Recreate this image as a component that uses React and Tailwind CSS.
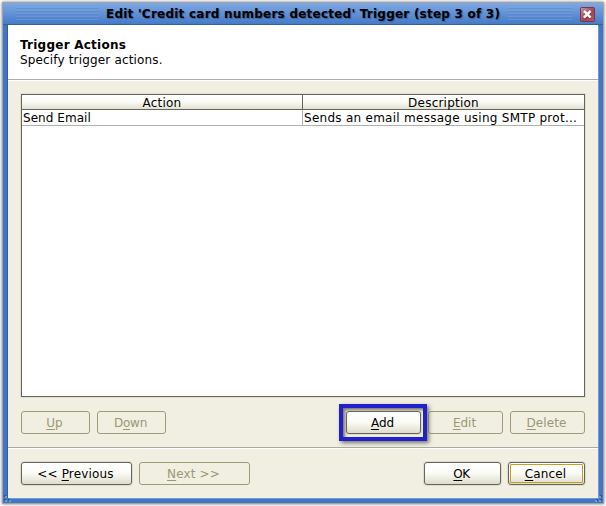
import React from 'react';
import clsx from 'clsx';

const Button = ({ className, textClassName, label, mnemonic = 0, disabled, focused }) => (
    <button
        disabled={disabled}
        className={clsx(
            'relative flex h-[23px] shrink-0 items-center justify-center rounded-[3px] border pt-[2px] pr-[2px] text-[12px] leading-[15px]',
            disabled
                ? 'border-[#9c9c78] text-[#999973]'
                : 'border-[#65655a] bg-linear-to-b from-white via-[#fafaf5] to-[#dddccb] text-black shadow-[0_0_0_1px_#dedccf]',
            className
        )}
    >
        {focused && <span className="absolute inset-px rounded-[1px] border border-[#c89b22]" />}
        <span className={clsx('relative whitespace-pre', textClassName)}>
            {label.slice(0, mnemonic)}
            <span className="underline decoration-1 underline-offset-2">{label[mnemonic]}</span>
            {label.slice(mnemonic + 1)}
        </span>
    </button>
);

// Engraved stripes on both sides of the window title
const Grip = ({ className }) => (
    <div className={clsx('flex h-[14px] shrink-0 flex-col justify-between', className)}>
        {[0, 1, 2, 3, 4].map((i) => (
            <div key={i} className="h-[2px] border-t border-b border-t-[#82a9e1]/40 border-b-[#4d79be]/30" />
        ))}
    </div>
);

const CornerDots = ({ className }) => (
    <svg className={className} width="9" height="9" viewBox="0 0 9 9" shapeRendering="crispEdges">
        {[[1, 1], [1, 5], [5, 5]].map(([x, y]) => (
            <g key={`${x}-${y}`}>
                <rect x={x} y={y} width="2" height="2" fill="#2c5798" />
                <rect x={x + 1} y={y + 1} width="2" height="2" fill="#7199d4" />
            </g>
        ))}
    </svg>
);

const App = () => {
    return (
        <div className="h-[506px] w-[606px] bg-white pt-[3px] pl-[3px] font-['DejaVu_Sans',sans-serif] text-[12px] text-black">
            <div className="relative flex h-[500px] w-[600px] flex-col bg-[#4276c2] px-[5px] pb-[5px] shadow-[0_0_0_1px_#a0a4a8,0_0_3px_1px_#777777]">
                {/* Title bar */}
                <div className="-mx-[5px] flex h-[22px] shrink-0 border-b border-[#34619f] bg-linear-to-b from-[#7ea8e2] to-[#467bc8] pt-[3px] pl-[13px]">
                    <Grip className="mt-px w-[82px]" />
                    <h1 className="ml-[8px] w-[402px] shrink-0 text-[12px] leading-[16px] font-bold tracking-[0.23px] whitespace-pre [text-shadow:1px_1px_1px_#365c94]">
                        Edit 'Credit card numbers detected' Trigger (step 3 of 3)
                    </h1>
                    <Grip className="mt-px w-[64px]" />
                    <svg className="mt-px ml-[8px]" width="15" height="15" viewBox="0 0 15 15">
                        <defs>
                            <linearGradient id="close" x1="0" y1="0" x2="1" y2="1">
                                <stop offset="0" stopColor="#c89aa2" />
                                <stop offset="0.55" stopColor="#a44250" />
                                <stop offset="1" stopColor="#b45a60" />
                            </linearGradient>
                        </defs>
                        <rect x="0.5" y="0.5" width="14" height="14" rx="1" fill="url(#close)" stroke="#74374f" />
                        <path d="M4.5 5l6 6M10.5 5l-6 6" stroke="#5b1722" strokeWidth="2.6" />
                        <path d="M4 4l6.6 6.6M10.6 4L4 10.6" stroke="#fff" strokeWidth="2.5" />
                    </svg>
                </div>

                <div className="flex grow flex-col bg-[#f1efe2] shadow-[-1px_0_0_#2f5ea5,1px_1px_0_#6d9adb]">
                    {/* Step header */}
                    <div className="h-[56px] shrink-0 border-b border-white bg-white">
                        <div className="h-[55px] border-b border-[#adadad] pt-[13px] pl-[12px] leading-[15px]">
                            <h2 className="font-bold tracking-[0.24px]">Trigger Actions</h2>
                            <p className="tracking-[0.16px]">Specify trigger actions.</p>
                        </div>
                    </div>

                    {/* Actions table */}
                    <div className="mx-[13px] mt-[13px] h-[303px] shrink-0 border border-[#65655a] bg-white shadow-[0_0_0_1px_#e1dfd2]">
                        <div className="flex h-[15px] border-b border-[#65655a] bg-linear-to-b from-white via-[#fafaf5] to-[#e2e1d2] text-center leading-[17px] tracking-[0.22px]">
                            <div className="w-[281px] shrink-0 border-r border-[#65655a]">Action</div>
                            <div className="w-[281px] shrink-0">Description</div>
                        </div>
                        <div className="flex h-[16px] border-b border-[#b0b0b0] leading-[17px] whitespace-pre">
                            <div className="h-[15px] w-[281px] shrink-0 border-r border-[#b0b0b0] pl-px tracking-[0.05px]">Send Email</div>
                            <div className="h-[15px] pl-px tracking-[0.27px]">Sends an email message using SMTP prot...</div>
                        </div>
                    </div>

                    <div className="mt-[14px] flex h-[36px] shrink-0 px-[13px]">
                        <Button className="w-[69px]" label="Up" disabled />
                        <Button className="ml-[7px] w-[69px]" textClassName="-tracking-[0.2px]" label="Down" mnemonic={1} disabled />
                        <div className="relative ml-auto">
                            <Button className="w-[75px]" label="Add" />
                            <div className="absolute -top-[7px] -left-[7px] z-10 h-[37px] w-[88px] border-4 border-[#2020cc] shadow-[2px_2px_4px_#77776a,inset_2px_2px_3px_#77776a]" />
                        </div>
                        <Button className="ml-[7px] w-[75px]" label="Edit" disabled />
                        <Button className="ml-[7px] w-[75px]" textClassName="tracking-[0.1px]" label="Delete" disabled />
                    </div>

                    {/* Wizard navigation */}
                    <div className="h-[2px] shrink-0 border-t border-b border-t-[#a5aaa2] border-b-white" />
                    <div className="mt-[13px] flex px-[13px]">
                        <Button className="w-[111px]" textClassName="tracking-[0.18px]" label="<< Previous" mnemonic={3} />
                        <Button className="ml-[7px] w-[111px]" textClassName="tracking-[0.15px]" label="Next >>" disabled />
                        <Button className="ml-auto w-[77px]" textClassName="-tracking-[0.5px]" label="OK" />
                        <Button className="ml-[7px] w-[77px]" textClassName="tracking-[0.15px]" label="Cancel" focused />
                    </div>
                </div>
                <CornerDots className="absolute bottom-0 left-0" />
                <CornerDots className="absolute right-0 bottom-0 -scale-x-100" />
            </div>
        </div>
    );
};

export default App;
